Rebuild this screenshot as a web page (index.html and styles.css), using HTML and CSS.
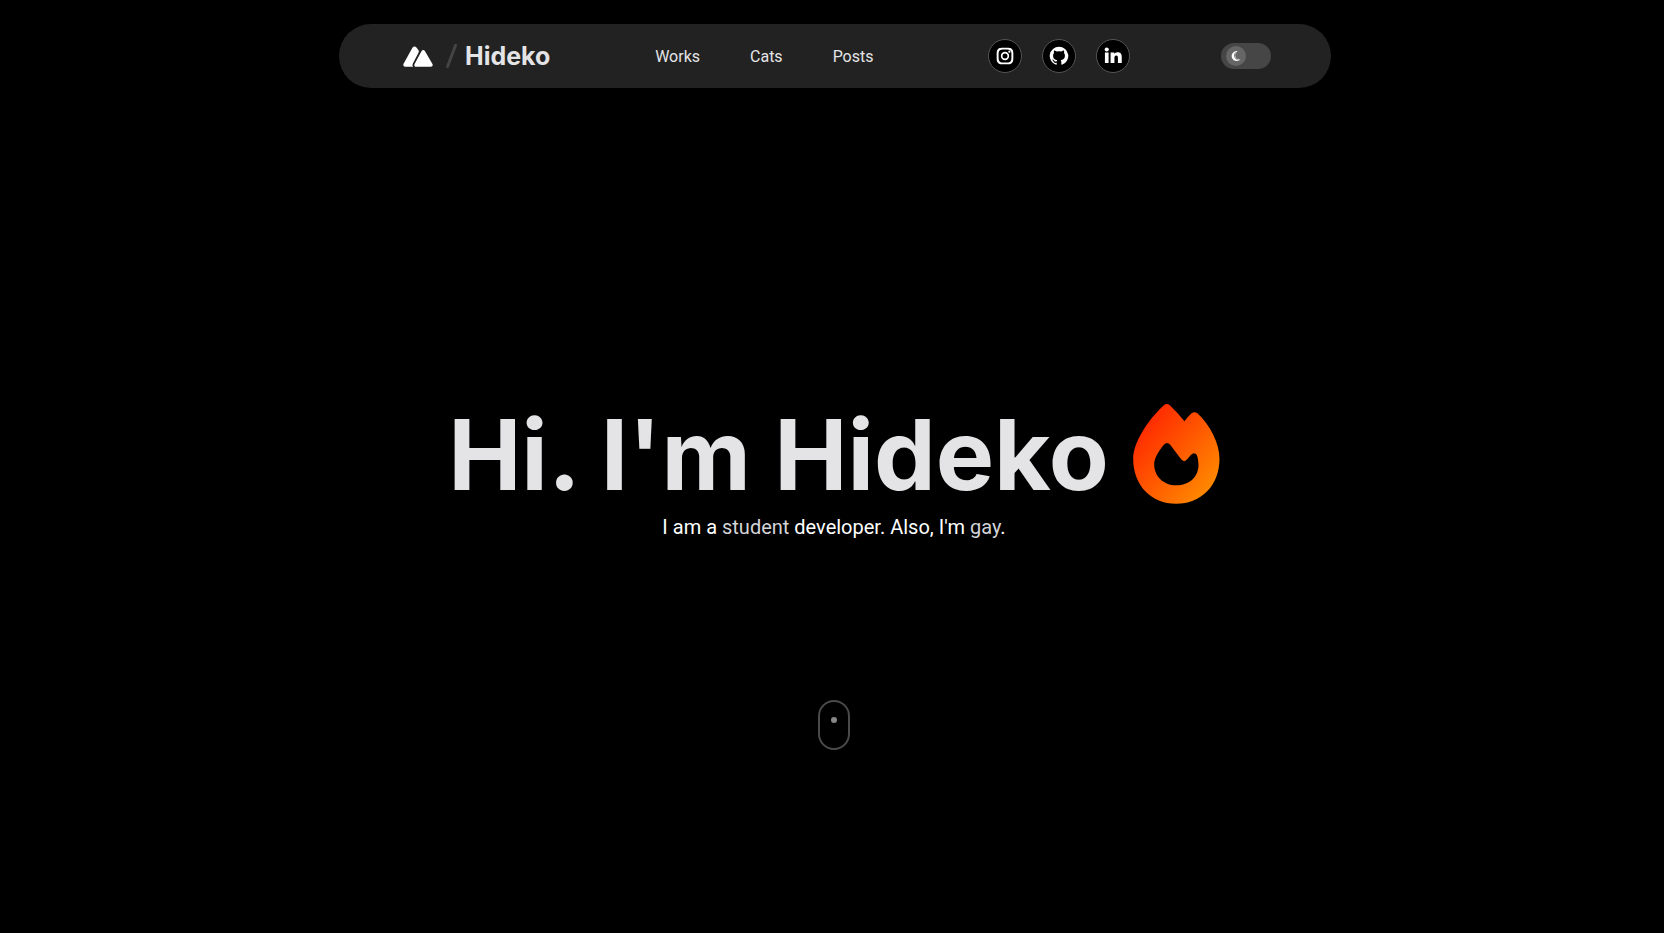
FILE: index.html
```html
<!DOCTYPE html>
<html lang="en">
<head>
<meta charset="utf-8">
<meta name="viewport" content="width=device-width, initial-scale=1">
<title>Hideko</title>
<link rel="stylesheet" href="styles.css">
</head>
<body>
<header class="navbar">
  <a class="brand" href="#">
    <svg class="brand-mark" viewBox="0 0 90 64" aria-hidden="true"><path d="M28 5Q34-2 41 5L47 14Q48 18 46 21L29 54Q27 61 30 63H5Q-2 62 1 54ZM56 15Q61 9 66 15L89 55Q92 62 84 63H37Q32 61 35 54Z"/></svg>
    <svg class="brand-slash" viewBox="0 0 11 24" aria-hidden="true"><path d="M9.500 1.500L1.500 22.500"/></svg>
    <span class="brand-name">Hideko</span>
  </a>
  <nav class="links">
    <a href="#works">Works</a>
    <a href="#cats">Cats</a>
    <a href="#posts">Posts</a>
  </nav>
  <div class="socials">
    <a href="#instagram" aria-label="Instagram"><svg viewBox="0 0 24 24"><path fill-rule="evenodd" d="M12 2c2.700 0 3.060.010 4.120.060 1.070.050 1.790.220 2.430.470.660.250 1.210.590 1.770 1.150.550.550.890 1.110 1.150 1.770.250.640.420 1.360.470 2.430C21.990 8.940 22 9.300 22 12s-.010 3.060-.060 4.120c-.050 1.070-.220 1.790-.470 2.430a4.900 4.900 0 0 1-1.150 1.770 4.900 4.900 0 0 1-1.770 1.150c-.640.250-1.360.420-2.430.470-1.060.050-1.420.060-4.120.060s-3.060-.010-4.120-.060c-1.070-.050-1.790-.220-2.430-.470a4.900 4.900 0 0 1-1.770-1.150 4.900 4.900 0 0 1-1.150-1.770c-.250-.640-.420-1.360-.470-2.430C2.010 15.060 2 14.700 2 12s.010-3.060.060-4.120c.050-1.070.220-1.790.470-2.430a4.900 4.900 0 0 1 1.150-1.770 4.900 4.900 0 0 1 1.770-1.150c.640-.250 1.360-.420 2.430-.470C8.940 2.010 9.300 2 12 2zm0 2.300c-4 0-5.300 0-6.500 1.200S4.300 8 4.300 12s0 5.300 1.200 6.500 2.500 1.200 6.500 1.200 5.300 0 6.500-1.200 1.200-2.500 1.200-6.500 0-5.300-1.200-6.500S16 4.300 12 4.300zM12 7a5 5 0 1 1 0 10 5 5 0 0 1 0-10zm0 2a3 3 0 1 0 0 6 3 3 0 0 0 0-6zm5.250-3.600a1.350 1.350 0 1 1 0 2.700 1.350 1.350 0 0 1 0-2.700z"/></svg></a>
    <a href="#github" aria-label="GitHub"><svg viewBox="1 1 22 22"><path d="M12 1.800a10.200 10.200 0 0 0-3.230 19.880c.510.090.700-.220.700-.490v-1.730c-2.840.610-3.440-1.370-3.440-1.370-.460-1.180-1.130-1.490-1.130-1.490-.930-.640.070-.620.070-.620 1.020.070 1.560 1.050 1.560 1.050.910 1.560 2.390 1.110 2.970.850.090-.660.360-1.110.650-1.370-2.260-.260-4.640-1.130-4.640-5.030 0-1.120.400-2.030 1.050-2.740-.110-.260-.460-1.300.090-2.700 0 0 .860-.270 2.800 1.050a9.700 9.700 0 0 1 5.110 0c1.940-1.320 2.800-1.050 2.800-1.050.550 1.400.200 2.440.100 2.700.650.710 1.040 1.620 1.040 2.740 0 3.910-2.380 4.770-4.650 5.020.360.320.690.940.690 1.900v2.790c0 .270.190.590.710.490A10.200 10.200 0 0 0 12 1.800z"/></svg></a>
    <a href="#linkedin" aria-label="LinkedIn"><svg viewBox="0 0 24 24"><circle cx="4.500" cy="4.200" r="2.500"/><path d="M2.300 7.800h4.400V20.500H2.300zM9.100 7.800h4.400v1.700c.6-1.100 2-2 4-2 4.200 0 5 2.700 5 6.100V20.500h-4.600v-5.900c0-1.500-.1-3.200-1.900-3.200s-2.300 1.500-2.300 3.100v6H9.100z"/></svg></a>
  </div>
  <button class="theme-toggle" type="button" aria-label="Toggle dark theme"><span class="knob"><svg viewBox="0 0 10 10" aria-hidden="true"><path d="M5.500 0A5 5 0 1 0 9.500 8.200Q8.800 8.500 8 8.500A4 4.200 0 0 1 6.500.500Q6 0 5.500 0z"/><path class="moon-line" d="M4.600 1.500A4.400 4.400 0 0 0 6.600 8.700"/></svg></span></button>
</header>
<main class="hero">
  <div class="headline">
    <h1>Hi. I'm Hideko</h1>
    <svg class="flame" viewBox="64 41 260 300" aria-hidden="true">
      <defs><linearGradient id="fire" x1="0" y1="0" x2="1" y2="1"><stop offset="0" stop-color="#ff1500"/><stop offset="1" stop-color="#ff9900"/></linearGradient></defs>
      <path fill="url(#fire)" fill-rule="evenodd" d="M156 45Q165 37 174 45Q198 68 218 93Q228 79 239 69Q248 62 257 69C295 104 323 160 323 205C323 285 268 340 193 340C118 340 64 285 64 205C64 160 105 92 156 45ZM156 163Q166 153 175 163L208 207Q217 218 226 207L237 194Q247 184 255 194Q260 205 260 224C260 260 232 285 193 285C155 285 127 258 127 221C127 205 140 182 156 163Z"/>
    </svg>
  </div>
  <p class="tagline">I am a <span class="soft">student</span> developer. Also, I'm <span class="soft">gay</span>.</p>
  <a class="scroll-hint" href="#works" aria-label="Scroll down"><span class="wheel"></span></a>
</main>
</body>
</html>
```
FILE: styles.css
```css
* {
  box-sizing: border-box;
}

body {
  margin: 0;
  min-height: 100vh;
  padding: 24px 0 0 6px;
  display: flex;
  flex-direction: column;
  align-items: center;
  background: #000;
  color: #fff;
  font-family: Roboto, sans-serif;
}

a {
  color: inherit;
  text-decoration: none;
}

.navbar {
  width: 100%;
  max-width: 992px;
  height: 64px;
  padding: 0 60px 0 64px;
  display: flex;
  align-items: center;
  justify-content: space-between;
  border-radius: 32px;
  background: #222;
}

.brand {
  display: flex;
  align-items: center;
  margin-right: 14px;
}

.brand-mark {
  width: 30px;
  height: 21px;
  fill: #fff;
}

.brand-slash {
  width: 11px;
  height: 24px;
  margin: 0 8px 0 13px;
  fill: none;
  stroke: #444;
  stroke-width: 3;
  stroke-linecap: round;
}

.brand-name {
  color: #e4e4e7;
  font-family: Inter, sans-serif;
  font-size: 25px;
  font-weight: 700;
}

.links {
  display: flex;
  gap: 50px;
  color: #e4e4e7;
  font-size: 16px;
}

.socials {
  display: flex;
  gap: 20px;
  margin-left: 24px;
}

.socials a {
  width: 34px;
  height: 34px;
  display: grid;
  place-items: center;
  border: 1px solid #555;
  border-radius: 50%;
  background: #000;
}

.socials svg {
  width: 20px;
  height: 20px;
  fill: #fff;
}

.theme-toggle {
  width: 50px;
  height: 26px;
  padding: 0 5px;
  display: flex;
  align-items: center;
  border: 0;
  border-radius: 13px;
  background: #464646;
}

.knob {
  width: 20px;
  height: 20px;
  display: grid;
  place-items: center;
  border-radius: 50%;
  background: #666;
}

.knob svg {
  width: 10px;
  height: 10px;
  fill: #fff;
}

.moon-line {
  fill: none;
  stroke: #777;
  stroke-width: 1;
}

.hero {
  flex: 1;
  padding: 132px 2px 0 0;
  display: flex;
  flex-direction: column;
  align-items: center;
  justify-content: center;
}

.headline {
  display: flex;
  align-items: center;
  gap: 24px;
}

h1 {
  margin: 0;
  padding-top: 2px;
  color: #e4e4e7;
  font-family: Inter, sans-serif;
  font-size: 98px;
  font-weight: 700;
  line-height: 98px;
}

.flame {
  width: 87px;
  height: 100px;
}

.tagline {
  margin: 11px 0 0;
  font-size: 20px;
  line-height: 24px;
}

.soft {
  color: #d4d4d8;
}

.scroll-hint {
  width: 32px;
  height: 50px;
  margin-top: 161px;
  padding-top: 15px;
  display: flex;
  justify-content: center;
  border: 2px solid #4a4a4a;
  border-radius: 16px;
}

.wheel {
  width: 6px;
  height: 6px;
  border-radius: 50%;
  background: #888;
}
```
